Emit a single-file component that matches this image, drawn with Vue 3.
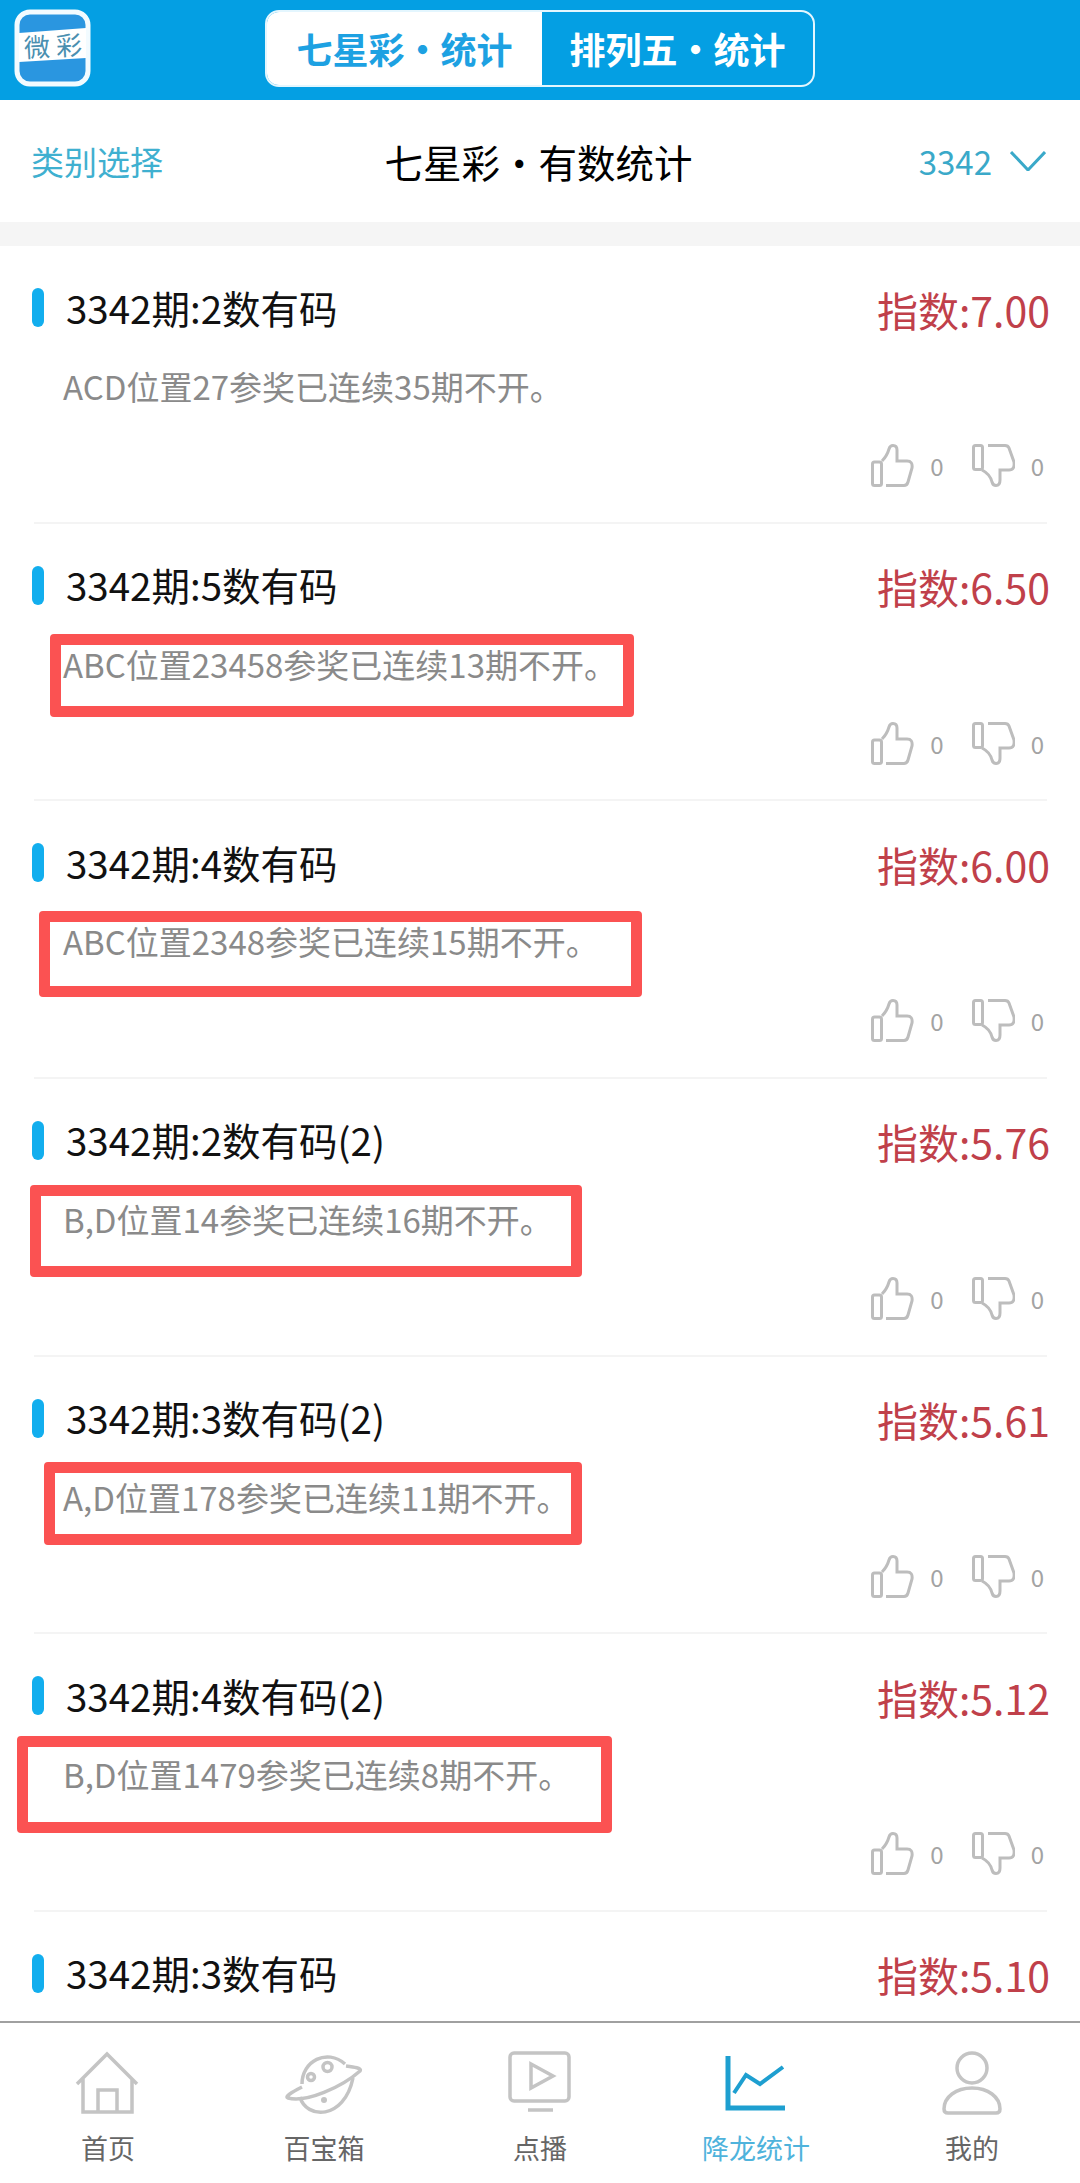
<template>
  <div class="page">
    <header class="top-bar">
      <svg class="logo" viewBox="0 0 77 78">
        <rect x="3" y="3" width="71" height="72" rx="13" fill="#2a96e0" stroke="#f2fbff" stroke-width="5" />
        <polygon points="5,24 72,19 72,49 5,53" fill="#fff" />
        <text x="10" y="47" class="logo-text" transform="rotate(-3 38 38)">微</text>
        <text x="42" y="47" class="logo-text" transform="rotate(-3 38 38)">彩</text>
      </svg>
      <div class="tabs">
        <div class="tab active">七星彩・统计</div>
        <div class="tab">排列五・统计</div>
      </div>
    </header>

    <div class="sub-bar">
      <span class="sub-left">类别选择</span>
      <span class="sub-title">七星彩・有数统计</span>
      <span class="sub-right">
        3342
        <svg class="chevron" viewBox="0 0 36 20">
          <path d="M1 1 L18 19 L35 1" fill="none" stroke="#3aa9c9" stroke-width="3" />
        </svg>
      </span>
    </div>
    <div class="gap-band"></div>

    <div class="list">
      <div v-for="item in items" :key="item.title + item.score" class="row">
        <div class="row-head">
          <i class="bar"></i>
          <span class="row-title">{{ item.title }}</span>
          <span class="row-score">指数:{{ item.score }}</span>
        </div>
        <template v-if="item.desc">
          <p class="row-desc">{{ item.desc }}</p>
          <div class="votes">
            <svg class="thumb" viewBox="0 0 43 43">
              <rect x="1.5" y="18" width="9" height="23.5" rx="2" />
              <path d="M15 41.5 H33 Q36 41.5 37 38 L41 24 Q42 17 36 17 H26 V6 Q26 1.5 22 1.5 Q19 1.5 18 5 Q16 12 11 17" />
            </svg>
            <span class="count">0</span>
            <svg class="thumb down" viewBox="0 0 43 43">
              <rect x="1.5" y="1.5" width="9" height="24" rx="2" />
              <path d="M16 1.5 H33 Q36 1.5 37 4 L42 18 Q43 26 37 26 H28 V36 Q28 41.5 24 41.5 Q21 41.5 20 38 Q18 30 10 26" />
            </svg>
            <span class="count">0</span>
          </div>
        </template>
        <div v-if="item.box" class="red-box" :style="boxStyle(item.box)"></div>
      </div>
    </div>

    <nav class="tab-bar">
      <div class="nav-item">
        <svg class="nav-icon" viewBox="0 0 64 64">
          <path d="M1 33 L31 3 L61 33 M7 27 V61 H56 V27 M22 61 V39 H41 V61" />
        </svg>
        <span>首页</span>
      </div>
      <div class="nav-item">
        <svg class="nav-icon" viewBox="0 0 64 64">
          <path d="M10 33 C10 10 35 -3 53 13" />
          <path d="M8 46 C14 68 52 70 61 27" />
          <path d="M10 36 C0 41 -8 46 -4 47 C14 52 50 36 68 20 C70 17 62 16 54 15" />
          <circle cx="35.5" cy="16" r="4.5" />
          <circle cx="19" cy="26" r="3.5" />
          <circle cx="32" cy="49" r="3" class="solid" />
        </svg>
        <span>百宝箱</span>
      </div>
      <div class="nav-item">
        <svg class="nav-icon" viewBox="0 0 64 64">
          <rect x="2" y="2" width="59" height="48" rx="4" />
          <path d="M23 13 L45 25 L23 37 Z M20 59 H45" />
        </svg>
        <span>点播</span>
      </div>
      <div class="nav-item active">
        <svg class="nav-icon" viewBox="0 0 64 64">
          <path d="M4 5 V57 H61" />
          <path d="M10 42 L22 24 L36 33 L59 16" class="thin" />
        </svg>
        <span>降龙统计</span>
      </div>
      <div class="nav-item">
        <svg class="nav-icon" viewBox="0 0 64 64">
          <circle cx="32" cy="17" r="15" />
          <path d="M8 62 Q4 62 4 58 C4 46 16 37 32 37 C48 37 60 46 60 58 Q60 62 56 62 Z" />
        </svg>
        <span>我的</span>
      </div>
    </nav>
  </div>
</template>

<script setup>
const items = [
  { title: '3342期:2数有码', score: '7.00', desc: 'ACD位置27参奖已连续35期不开。' },
  { title: '3342期:5数有码', score: '6.50', desc: 'ABC位置23458参奖已连续13期不开。', box: [50, 110, 584, 83] },
  { title: '3342期:4数有码', score: '6.00', desc: 'ABC位置2348参奖已连续15期不开。', box: [39, 110, 603, 86] },
  { title: '3342期:2数有码(2)', score: '5.76', desc: 'B,D位置14参奖已连续16期不开。', box: [30, 106, 552, 92] },
  { title: '3342期:3数有码(2)', score: '5.61', desc: 'A,D位置178参奖已连续11期不开。', box: [44, 105, 538, 83] },
  { title: '3342期:4数有码(2)', score: '5.12', desc: 'B,D位置1479参奖已连续8期不开。', box: [17, 102, 595, 97] },
  { title: '3342期:3数有码', score: '5.10', desc: '' }
]

// annotation rectangle: left, top, width, height within the row
const boxStyle = (box) => ({
  left: box[0] + 'px',
  top: box[1] + 'px',
  width: box[2] + 'px',
  height: box[3] + 'px'
})
</script>

<style>
html,
body {
  margin: 0;
  background: #fff;
}
</style>

<style scoped>
.page {
  width: 1080px;
  height: 2183px;
  display: flex;
  flex-direction: column;
  overflow: hidden;
  background: #fff;
  font-family: "Noto Sans CJK SC", "Noto Sans", sans-serif;
}

.top-bar {
  height: 100px;
  flex: none;
  display: flex;
  align-items: center;
  padding: 0 0 4px 14px;
  box-sizing: border-box;
  background: #049fe3;
}

.logo {
  width: 77px;
  height: 78px;
  flex: none;
}

.logo-text {
  font-size: 26px;
  fill: #4a8fb0;
}

.tabs {
  margin-left: 174px;
  width: 550px;
  height: 77px;
  display: flex;
  box-sizing: border-box;
  border: 2px solid #e4f6fe;
  border-radius: 14px;
  overflow: hidden;
}

.tab {
  flex: 1;
  display: flex;
  align-items: center;
  justify-content: center;
  font-size: 36px;
  font-weight: 700;
  color: #fff;
}

.tab.active {
  flex: none;
  width: 275px;
  background: #fff;
  color: #1da1e2;
}

.sub-bar {
  height: 122px;
  flex: none;
  display: grid;
  grid-template-columns: 1fr auto 1fr;
  align-items: center;
  padding: 0 34px 0 31px;
  box-sizing: border-box;
}

.sub-left {
  font-size: 33px;
  color: #3fb0d0;
}

.sub-title {
  font-size: 38.5px;
  color: #000;
}

.sub-right {
  display: flex;
  align-items: center;
  justify-content: flex-end;
  gap: 18px;
  font-size: 33px;
  color: #3aa9c9;
}

.chevron {
  width: 36px;
  height: 20px;
}

.gap-band {
  height: 24px;
  flex: none;
  background: #f5f5f5;
}

.list {
  flex: 1;
  min-height: 0;
  overflow: hidden;
}

.row {
  position: relative;
  height: 277.67px;
  box-sizing: border-box;
  padding: 42px 30px 0 32px;
  display: flex;
  flex-direction: column;
}

.row::after {
  content: "";
  position: absolute;
  left: 34px;
  right: 33px;
  bottom: 0;
  height: 2px;
  background: #f4f4f4;
}

.row-head {
  height: 39px;
  flex: none;
  display: flex;
  align-items: center;
}

.bar {
  width: 12px;
  height: 39px;
  flex: none;
  border-radius: 6px;
  background: #12aeee;
}

.row-title {
  margin: -2px 0 0 22px;
  font-size: 38.5px;
  color: #111;
  white-space: nowrap;
}

.row-score {
  margin: 2px 0 0 auto;
  font-size: 41px;
  color: #c0404a;
  white-space: nowrap;
}

.row-desc {
  margin: 37px 0 0 31px;
  height: 44px;
  font-size: 33px;
  line-height: 44px;
  color: #8a8a8a;
  white-space: nowrap;
}

.votes {
  position: absolute;
  top: 198px;
  right: 36px;
  display: flex;
  align-items: center;
}

.thumb {
  width: 43px;
  height: 43px;
  fill: none;
  stroke: #bdbdbd;
  stroke-width: 3;
}

.thumb.down {
  margin-left: 28px;
}

.count {
  margin-left: 16px;
  font-size: 24px;
  line-height: 43px;
  color: #a3a3a3;
}

.red-box {
  position: absolute;
  box-sizing: border-box;
  border: 11px solid #fb5252;
  border-radius: 4px;
}

.tab-bar {
  height: 162px;
  flex: none;
  position: relative;
  display: grid;
  grid-template-columns: repeat(5, 1fr);
  padding-top: 28px;
  box-sizing: border-box;
  border-top: 2px solid #a0a0a0;
  background: #fff;
}

.nav-item {
  display: flex;
  flex-direction: column;
  align-items: center;
  font-size: 27px;
  line-height: 36px;
  color: #666;
}

.nav-item.active {
  color: #4fb3dc;
}

.nav-icon {
  width: 64px;
  height: 64px;
  margin-bottom: 15px;
  overflow: visible;
  fill: none;
  stroke: #c4c4c4;
  stroke-width: 3.5;
}

.nav-icon .solid {
  fill: #c4c4c4;
  stroke: none;
}

.nav-item.active .nav-icon {
  stroke: #1e9fd0;
  stroke-width: 5;
}

.nav-item.active .nav-icon .thin {
  stroke-width: 4;
}
</style>
